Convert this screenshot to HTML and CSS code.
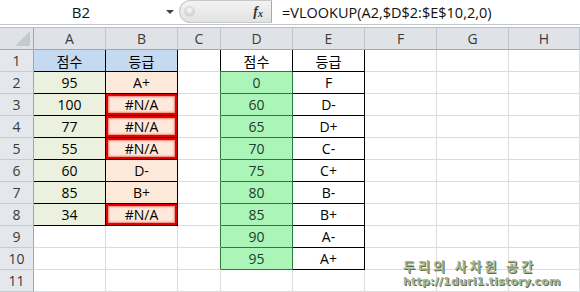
FILE: index.html
```html
<!DOCTYPE html>
<html lang="ko">
<head>
<meta charset="utf-8">
<title>VLOOKUP</title>
<link rel="stylesheet" href="styles.css">
</head>
<body>
<div class="app">
  <div class="fbar">
    <div class="namebox"><span class="ref">B2</span><span class="caret"></span></div>
    <div class="fxzone"><span class="knob"></span><span class="fx">f<sub>x</sub></span></div>
    <div class="formula">=VLOOKUP(A2,$D$2:$E$10,2,0)</div>
  </div>
  <div class="gap"></div>
  <div class="sheet">
    <div class="corner"><span class="tri"></span></div>
    <div class="ch">A</div><div class="ch">B</div><div class="ch">C</div><div class="ch">D</div><div class="ch">E</div><div class="ch">F</div><div class="ch">G</div><div class="ch">H</div>

    <div class="rh">1</div>
    <div class="c hb bk">점수</div><div class="c hb bk">등급</div><div class="c rk"></div><div class="c bk gb">점수</div><div class="c bk">등급</div><div class="c"></div><div class="c"></div><div class="c"></div>

    <div class="rh">2</div>
    <div class="c ga bk">95</div><div class="c pb bk">A+</div><div class="c rg"></div><div class="c gd">0</div><div class="c bk">F</div><div class="c"></div><div class="c"></div><div class="c"></div>

    <div class="rh">3</div>
    <div class="c ga bk">100</div><div class="c pb bk err">#N/A</div><div class="c rg"></div><div class="c gd">60</div><div class="c bk">D-</div><div class="c"></div><div class="c"></div><div class="c"></div>

    <div class="rh">4</div>
    <div class="c ga bk">77</div><div class="c pb bk err">#N/A</div><div class="c rg"></div><div class="c gd">65</div><div class="c bk">D+</div><div class="c"></div><div class="c"></div><div class="c"></div>

    <div class="rh">5</div>
    <div class="c ga bk">55</div><div class="c pb bk err">#N/A</div><div class="c rg"></div><div class="c gd">70</div><div class="c bk">C-</div><div class="c"></div><div class="c"></div><div class="c"></div>

    <div class="rh">6</div>
    <div class="c ga bk">60</div><div class="c pb bk">D-</div><div class="c rg"></div><div class="c gd">75</div><div class="c bk">C+</div><div class="c"></div><div class="c"></div><div class="c"></div>

    <div class="rh">7</div>
    <div class="c ga bk">85</div><div class="c pb bk">B+</div><div class="c rg"></div><div class="c gd">80</div><div class="c bk">B-</div><div class="c"></div><div class="c"></div><div class="c"></div>

    <div class="rh">8</div>
    <div class="c ga bk">34</div><div class="c pb bk err">#N/A</div><div class="c rg"></div><div class="c gd">85</div><div class="c bk">B+</div><div class="c"></div><div class="c"></div><div class="c"></div>

    <div class="rh">9</div>
    <div class="c"></div><div class="c"></div><div class="c rg"></div><div class="c gd">90</div><div class="c bk">A-</div><div class="c"></div><div class="c"></div><div class="c"></div>

    <div class="rh">10</div>
    <div class="c"></div><div class="c"></div><div class="c rg"></div><div class="c gd">95</div><div class="c bk">A+</div><div class="c"></div><div class="c"></div><div class="c"></div>

    <div class="rh">11</div>
    <div class="c"></div><div class="c"></div><div class="c"></div><div class="c"></div><div class="c"></div><div class="c"></div><div class="c"></div><div class="c"></div>
  </div>
  <div class="watermark">
    <div class="wm1">두리의 사차원 공간</div>
    <div class="wm2">http://1duri1.tistory.com</div>
  </div>
</div>
</body>
</html>
```
FILE: styles.css
```css
* { box-sizing: border-box; }
html, body { margin: 0; padding: 0; background: #fff; }
body { width: 580px; height: 292px; overflow: hidden; font-family: "Open Sans", "Noto Sans CJK KR", sans-serif; color: #000; }
.app { position: relative; width: 580px; height: 292px; overflow: hidden; }

.fbar { display: flex; height: 25px; border-bottom: 1px solid #c3c6ca; background: #fff; }
.namebox { width: 179px; display: flex; align-items: center; }
.ref { width: 162px; text-align: center; font-size: 15px; color: #111; }
.caret { width: 0; height: 0; border-left: 4px solid transparent; border-right: 4px solid transparent; border-top: 4px solid #444; margin-left: 4px; }
.fxzone { width: 93px; height: 23px; display: flex; align-items: center; justify-content: space-between; background: linear-gradient(#f3f3f3, #e2e2e2); border: 1px solid #c8c8c8; border-right: 1px solid #a8a8a8; border-radius: 12px 0 0 12px; padding: 0 8px 0 4px; }
.knob { width: 11px; height: 11px; border-radius: 50%; background: radial-gradient(circle at 50% 35%, #fafafa, #cfcfcf 75%); border: 1px solid #d8d8d8; }
.fx { font-family: "Liberation Serif", serif; font-style: italic; font-weight: bold; font-size: 14px; color: #333; }
.fx sub { font-size: 10px; vertical-align: -1px; }
.formula { flex: 1; padding-left: 10px; display: flex; align-items: center; font-size: 14.5px; color: #111; white-space: nowrap; }

.gap { height: 3px; border-bottom: 1px solid #b8bec6; }

.sheet { display: grid; grid-template-columns: 34px 72px 72px 43px 72px 72px 72px 72px 71px; grid-template-rows: repeat(12, 22px); }
.corner { background: #dfe3e8; border-right: 1px solid #9ea6b0; border-bottom: 1px solid #9ea6b0; position: relative; }
.tri { position: absolute; right: 3px; bottom: 3px; width: 0; height: 0; border-left: 15px solid transparent; border-bottom: 15px solid #c3c9d0; }
.ch { background: #dfe3e8; border-right: 1px solid #c0c6cd; border-bottom: 1px solid #9ea6b0; display: flex; align-items: center; justify-content: center; font-size: 14px; color: #3a3a3a; }
.rh { background: #e4e7eb; border-right: 1px solid #9ea6b0; border-bottom: 1px solid #c6cbd2; display: flex; align-items: center; justify-content: center; font-size: 14px; color: #3a3a3a; }
.c { border-right: 1px solid #dadcdd; border-bottom: 1px solid #dadcdd; display: flex; align-items: center; justify-content: center; font-size: 14px; }

.bk { border-right-color: #000; border-bottom-color: #000; }
.rk { border-right-color: #000; }
.rg { border-right-color: #2b7a38; }
.gb { border-bottom-color: #2b7a38; }
.hb { background: #c5d9f1; }
.ga { background: #ebf1de; }
.pb { background: #fde9d9; }
.gd { background: #abf5b9; border-right-color: #2b7a38; border-bottom-color: #2b7a38; color: #21402a; }
.err { box-shadow: inset 0 0 0 2px #e20000, inset 0 0 2px 3px rgba(235, 40, 40, 0.55); }

.watermark { position: absolute; left: 403px; top: 256px; font-weight: bold; color: #a6b68e; text-shadow: 1px 1px 0 #5f6e52; }
.wm1 { font-family: "Noto Sans CJK KR", sans-serif; font-size: 13px; line-height: 19px; letter-spacing: 3px; }
.wm2 { font-family: "DejaVu Sans", sans-serif; font-size: 11px; line-height: 13px; letter-spacing: 0.2px; }
```
